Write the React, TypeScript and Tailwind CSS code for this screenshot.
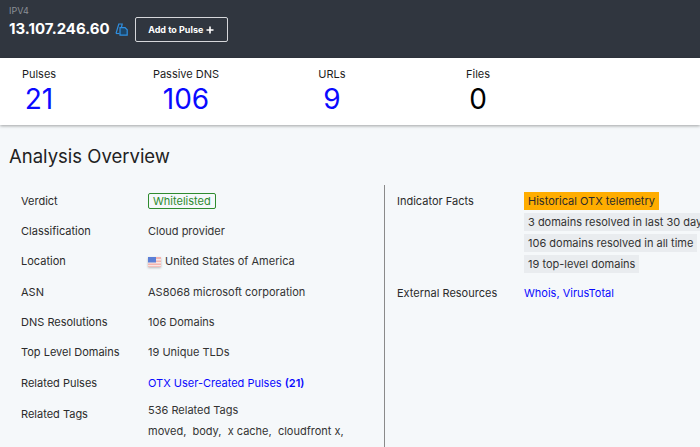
import React from 'react';

const font = { fontFamily: 'Inter, "Noto Sans", sans-serif' };

function CopyIcon() {
  return (
    <svg width="13" height="13" viewBox="0 0 13 13" fill="none" stroke="#2f8fe0" strokeWidth="1.2" className="ml-[5px] mt-[6px]">
      <path d="M1 10.5 L3.8 1 H7.2 L6.4 4.5" />
      <path d="M1 10.5 H4.5" />
      <path d="M5 4.6 H10 L12.2 6.8 V12.2 H5 Z" fill="#1d4668" />
    </svg>
  );
}

function Flag() {
  return (
    <svg width="13" height="10" viewBox="0 0 13 10" className="mr-[4px] drop-shadow-[0_1px_1px_rgba(0,0,0,0.25)]">
      <rect width="13" height="10" fill="#f3b5b0" />
      <rect y="2" width="13" height="1.5" fill="#f8e6e4" />
      <rect y="5" width="13" height="1.5" fill="#f8e6e4" />
      <rect y="8" width="13" height="1.2" fill="#f8e6e4" />
      <rect width="8" height="5.5" fill="#5b7fd6" />
    </svg>
  );
}

function Stat({ label, value, width, black }: { label: string; value: string; width: string; black?: boolean }) {
  return (
    <div className={`flex flex-col items-center ${width}`}>
      <div className="text-[11px] leading-[14px] text-[#1c1c1c] mt-[9px]">{label}</div>
      <div className={`text-[28px] leading-[34px] mt-[1px] ${black ? 'text-black' : 'text-[#0a0aff]'}`}>{value}</div>
    </div>
  );
}

function Row({ label, children }: { label: string; children: React.ReactNode }) {
  return (
    <div className="flex h-[30.3px] items-center">
      <div className="w-[127px] shrink-0 text-[#2b2b2b]">{label}</div>
      <div className="flex items-center text-[#333]">{children}</div>
    </div>
  );
}

function Fact({ children }: { children: React.ReactNode }) {
  return <div className="w-fit whitespace-nowrap bg-[#e9ecef] px-[4px] h-[18px] leading-[18px] text-[#333]">{children}</div>;
}

export default function App() {
  return (
    <div className="w-[700px] h-[447px] overflow-hidden bg-[#f5f8fa] text-[11px]" style={font}>
      <div className="h-[58px] bg-[#30363f] pl-[9px] pt-[5px]">
        <div className="text-[9px] leading-[12px] text-[#8b9097]">IPV4</div>
        <div className="flex items-start">
          <div className="text-[15px] leading-[24px] font-bold text-white">13.107.246.60</div>
          <CopyIcon />
          <button className="ml-[7px] h-[25px] w-[93px] rounded-[2px] border border-[#d5d7da] text-[9px] font-bold text-white flex items-center justify-center gap-[3px]">
            Add to Pulse
            <svg width="8" height="8" viewBox="0 0 8 8" stroke="white" strokeWidth="1.6"><path d="M4 0.5V7.5M0.5 4H7.5" /></svg>
          </button>
        </div>
      </div>

      <div className="flex h-[67px] bg-white shadow-[0_1px_3px_rgba(0,0,0,0.35)] relative pl-[9px]">
        <Stat label="Pulses" value="21" width="w-[60px]" />
        <Stat label="Passive DNS" value="106" width="w-[92px] ml-[71px]" />
        <Stat label="URLs" value="9" width="w-[50px] ml-[75px]" />
        <Stat label="Files" value="0" width="w-[40px] ml-[101px]" black />
      </div>

      <h1 className="text-[18.5px] leading-[26px] text-[#222] ml-[9px] mt-[18px] font-normal">Analysis Overview</h1>

      <div className="flex mt-[16px]">
        <div className="w-[385px] shrink-0 border-r border-[#8a8a8a] pl-[21px] pt-[1px] h-[262px]">
          <Row label="Verdict">
            <span className="border border-[#2e8b2e] rounded-[2px] text-[#2e8b2e] px-[4px] leading-[14px]">Whitelisted</span>
          </Row>
          <Row label="Classification">Cloud provider</Row>
          <Row label="Location"><Flag />United States of America</Row>
          <Row label="ASN">AS8068 microsoft corporation</Row>
          <Row label="DNS Resolutions">106 Domains</Row>
          <Row label="Top Level Domains">19 Unique TLDs</Row>
          <Row label="Related Pulses">
            <span className="text-[#0a0aff]">OTX User-Created Pulses <b className="font-semibold">(21)</b></span>
          </Row>
          <div className="flex mt-[1.5px]">
            <div className="w-[127px] shrink-0 text-[#2b2b2b] pt-[6px]">Related Tags</div>
            <div className="text-[#333]">
              <div className="leading-[20px]">536 Related Tags</div>
              <div className="leading-[20px] whitespace-pre mt-[1px]">moved,  body,  x cache,  cloudfront x,</div>
            </div>
          </div>
        </div>

        <div className="pl-[12px] flex-1 min-w-0 overflow-hidden">
          <div className="flex">
            <div className="w-[127px] shrink-0 text-[#2b2b2b] pt-[8px]">Indicator Facts</div>
            <div className="flex flex-col gap-[3px] pt-[7px]">
              <div className="w-fit whitespace-nowrap bg-[#ffad00] px-[4px] h-[18px] leading-[18px] text-[#2b2b2b]">Historical OTX telemetry</div>
              <Fact>3 domains resolved in last 30 days</Fact>
              <Fact>106 domains resolved in all time</Fact>
              <Fact>19 top-level domains</Fact>
            </div>
          </div>
          <div className="flex mt-[12px]">
            <div className="w-[127px] shrink-0 text-[#2b2b2b]">External Resources</div>
            <div className="text-[#0a0aff]">Whois, VirusTotal</div>
          </div>
        </div>
      </div>
    </div>
  );
}
